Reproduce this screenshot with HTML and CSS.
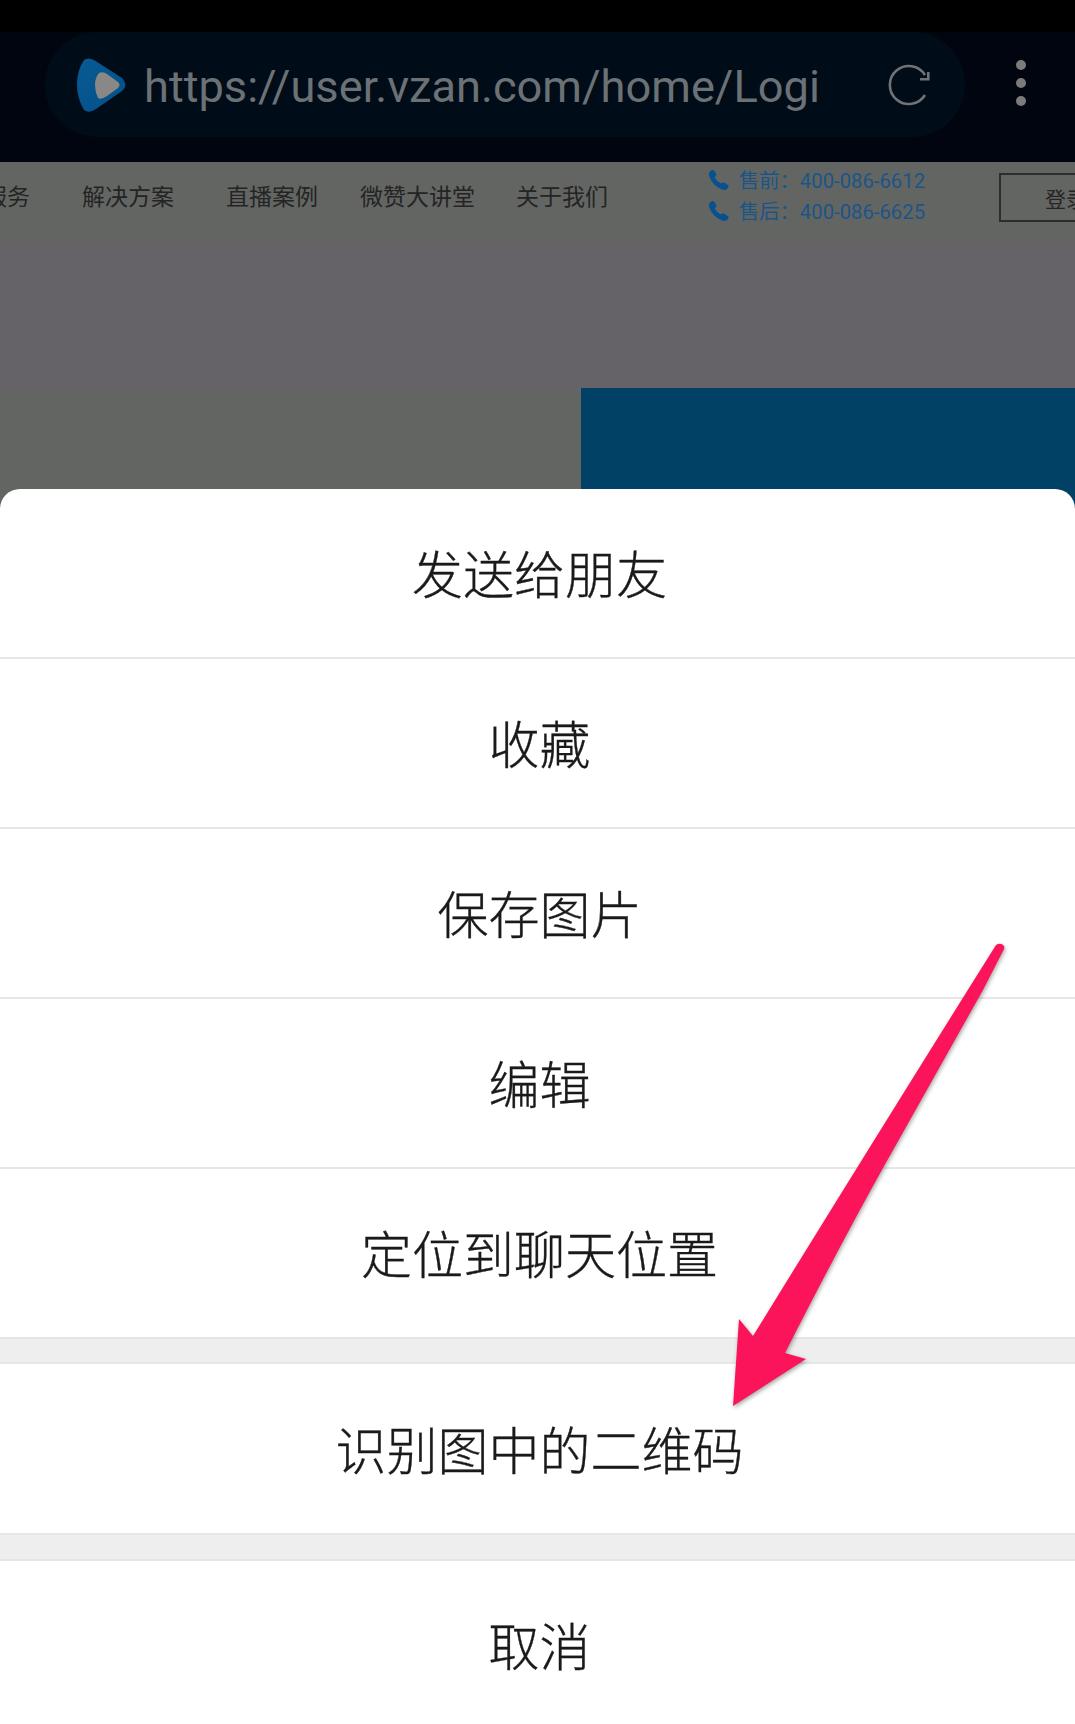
FILE: index.html
```html
<!DOCTYPE html>
<html>

<head>
    <meta charset="utf-8" />
    <title>识别图中的二维码</title>
    <meta name="viewport" content="width=device-width, initial-scale=1">
    <link rel="stylesheet" href="styles.css">
</head>

<body>

    <div class="page">
        <div class="statusbar"></div>

        <div class="toolbar">
            <div class="urlpill">
                <svg class="logo" viewBox="0 0 50 54">
                    <defs>
                        <linearGradient id="logoblue" x1="0" y1="0" x2="1" y2="1">
                            <stop offset="0" stop-color="#085a94" />
                            <stop offset="1" stop-color="#04508a" />
                        </linearGradient>
                    </defs>
                    <path d="M7 2 Q11 -1 17 2 L45 20 Q52 27 45 33 L19 51 Q12 56 7 52 Q0 40 0 27 Q0 12 7 2 Z" fill="url(#logoblue)" />
                    <path d="M22 15 Q26 13 30 16 L41 24 Q44 27 41 30 L30 38 Q24 42 21 40 Q18 34 18 27 Q18 20 22 15 Z" fill="#8a8886" />
                </svg>
                <span class="url">https://user.vzan.com/home/Logi</span>
                <svg class="reload" viewBox="0 0 46 46">
                    <path d="M41 33 A19 19 0 1 1 41 13" fill="none" stroke="#707376" stroke-width="2.6" />
                    <path d="M44.300 10 V17.300 H36" fill="none" stroke="#707376" stroke-width="2.6" />
                </svg>
            </div>
            <div class="dots"><i></i><i></i><i></i></div>
        </div>

        <div class="nav">
            <a class="navitem first">服务</a>
            <a class="navitem">解决方案</a>
            <a class="navitem">直播案例</a>
            <a class="navitem tight">微赞大讲堂</a>
            <a class="navitem tight">关于我们</a>
            <div class="phones">
                <div class="phone">
                    <svg class="phoneicon" viewBox="0 0 21 21"><path d="M1.500 3 Q3.500 .5 5.500 1 Q7.500 3 8.500 5.500 Q8.500 7 6.500 8.500 Q8.500 12 13 14.500 Q14.500 13 16 13.500 L20.500 16.500 Q21 18 19 20 Q17 21.500 14 20.500 Q5 17 1.500 8 Q.5 5 1.500 3 Z" /></svg>
                    <span>售前：400-086-6612</span>
                </div>
                <div class="phone">
                    <svg class="phoneicon" viewBox="0 0 21 21"><path d="M1.500 3 Q3.500 .5 5.500 1 Q7.500 3 8.500 5.500 Q8.500 7 6.500 8.500 Q8.500 12 13 14.500 Q14.500 13 16 13.500 L20.500 16.500 Q21 18 19 20 Q17 21.500 14 20.500 Q5 17 1.500 8 Q.5 5 1.500 3 Z" /></svg>
                    <span>售后：400-086-6625</span>
                </div>
            </div>
            <a class="login">登录</a>
        </div>

        <div class="banner"></div>
        <div class="hero">
            <div class="heroleft"></div>
            <div class="heroright"></div>
        </div>

        <div class="sheet">
            <div class="row">发送给朋友</div>
            <div class="row">收藏</div>
            <div class="row">保存图片</div>
            <div class="row">编辑</div>
            <div class="row">定位到聊天位置</div>
            <div class="band"></div>
            <div class="row qr">识别图中的二维码</div>
            <div class="band wide"></div>
            <div class="row last">取消</div>
        </div>

        <!-- annotation drawn on top of the screenshot -->
        <svg class="arrow" viewBox="0 0 1075 1724">
            <path d="M996 945 Q1001 942 1004 946 Q1005 948 1003 951 L983 990 L883 1168 Q840 1245 785 1353 L806 1359 L733 1406 L739 1319 L753 1336 Q880 1130 996 945 Z" />
        </svg>
    </div>

</body>

</html>
```

FILE: styles.css
```css
body {
    margin: 0;
    font-family: "Noto Sans CJK SC", "Noto Sans", sans-serif;
}

.page {
    position: relative;
    width: 1075px;
    height: 1724px;
    overflow: hidden;
    display: flex;
    flex-direction: column;
    background: #636562;
}

.statusbar {
    height: 32px;
    background: #000;
}

.toolbar {
    height: 130px;
    background: #00050f;
    display: flex;
    align-items: flex-start;
    padding-left: 45px;
    box-sizing: border-box;
}

.urlpill {
    width: 920px;
    height: 105px;
    background: #000c18;
    border-radius: 52px;
    display: flex;
    align-items: center;
    box-sizing: border-box;
    padding-left: 32px;
}

.logo {
    width: 50px;
    height: 54px;
    flex: none;
}

.url {
    margin-left: 17px;
    padding-top: 3px;
    font-family: Roboto, sans-serif;
    font-size: 45.2px;
    color: #6c7175;
    white-space: nowrap;
    width: 740px;
}

.reload {
    width: 46px;
    height: 46px;
    flex: none;
    overflow: visible;
}

.dots {
    margin-left: 51px;
    padding-top: 28px;
    display: flex;
    flex-direction: column;
    gap: 8px;
}

.dots i {
    display: block;
    width: 10px;
    height: 10px;
    border-radius: 50%;
    background: #7b7b7b;
}

.nav {
    height: 81px;
    padding-bottom: 16px;
    box-sizing: border-box;
    background: #636563;
    display: flex;
    align-items: center;
    gap: 52px;
    overflow: hidden;
    flex: none;
}

.navitem {
    font-size: 23px;
    color: #232423;
    white-space: nowrap;
    flex: none;
}

.first {
    margin-left: -16px;
}

.tight {
    margin-left: -10px;
}

.tight + .tight {
    margin-left: -11px;
}

.phones {
    margin-left: 48px;
    display: flex;
    flex-direction: column;
    gap: 2px;
    flex: none;
}

.phone {
    display: flex;
    align-items: center;
    gap: 10px;
    height: 29px;
    font-family: Roboto, "Noto Sans CJK SC", sans-serif;
    font-size: 20.3px;
    color: #1b5587;
    white-space: nowrap;
}

.phoneicon {
    width: 21px;
    height: 21px;
    fill: #07518e;
    flex: none;
}

.login {
    margin-left: 22px;
    margin-top: 6px;
    width: 130px;
    height: 49px;
    border: 2px solid #2c2d2c;
    box-sizing: border-box;
    flex: none;
    font-size: 21px;
    color: #232423;
    display: flex;
    align-items: center;
    padding-left: 44px;
    white-space: nowrap;
}

.banner {
    height: 145px;
    background: #656367;
    flex: none;
}

.hero {
    height: 125px;
    margin-bottom: -24px;
    display: flex;
    flex: none;
}

.heroleft {
    width: 581px;
    background: #636562;
}

.heroright {
    flex: 1;
    background: #004165;
}

.sheet {
    position: relative;
    flex: 1;
    background: #fff;
    border-radius: 20px 20px 0 0;
    display: flex;
    flex-direction: column;
}

.row {
    height: 170px;
    box-sizing: border-box;
    border-bottom: 2px solid #e6e6e6;
    padding: 0 0 2px 4px;
    display: flex;
    align-items: center;
    justify-content: center;
    font-size: 51px;
    font-weight: 300;
    -webkit-text-stroke: 0.35px #1a1a1a;
    color: #1a1a1a;
    flex: none;
}

.row.qr {
    height: 171px;
}

.row.last {
    border-bottom: 0;
    flex: 1;
    padding: 3px 0 0 4px;
}

.band {
    height: 25px;
    box-sizing: border-box;
    background: #eeeeee;
    border-bottom: 2px solid #e6e6e6;
    flex: none;
}

.band.wide {
    height: 26px;
}

.arrow {
    position: absolute;
    left: 0;
    top: 0;
    width: 1075px;
    height: 1724px;
    fill: #fb1459;
    filter: drop-shadow(1px 2px 2px rgba(0, 0, 0, 0.35));
}
```
